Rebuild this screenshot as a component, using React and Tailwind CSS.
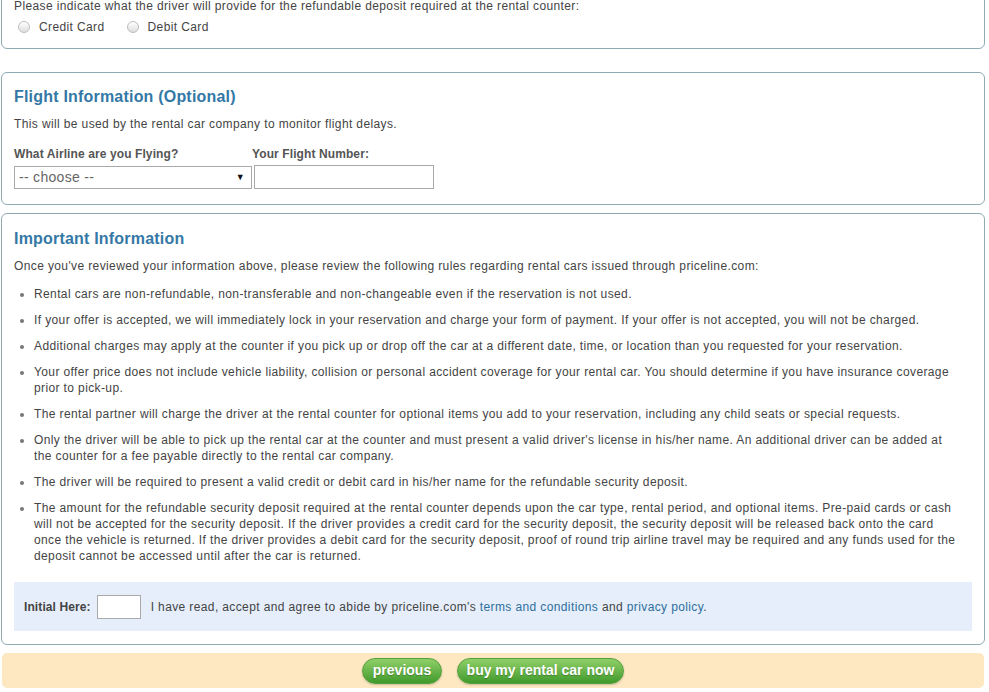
import React, { useState } from 'react';

const rules = [
    'Rental cars are non-refundable, non-transferable and non-changeable even if the reservation is not used.',
    'If your offer is accepted, we will immediately lock in your reservation and charge your form of payment. If your offer is not accepted, you will not be charged.',
    'Additional charges may apply at the counter if you pick up or drop off the car at a different date, time, or location than you requested for your reservation.',
    'Your offer price does not include vehicle liability, collision or personal accident coverage for your rental car. You should determine if you have insurance coverage prior to pick-up.',
    'The rental partner will charge the driver at the rental counter for optional items you add to your reservation, including any child seats or special requests.',
    "Only the driver will be able to pick up the rental car at the counter and must present a valid driver's license in his/her name. An additional driver can be added at the counter for a fee payable directly to the rental car company.",
    'The driver will be required to present a valid credit or debit card in his/her name for the refundable security deposit.',
    'The amount for the refundable security deposit required at the rental counter depends upon the car type, rental period, and optional items. Pre-paid cards or cash will not be accepted for the security deposit. If the driver provides a credit card for the security deposit, the security deposit will be released back onto the card once the vehicle is returned. If the driver provides a debit card for the security deposit, proof of round trip airline travel may be required and any funds used for the deposit cannot be accessed until after the car is returned.',
];

const Radio = ({ label, checked, onClick }) => (
    <label onClick={onClick} className="flex items-center gap-[9px] cursor-pointer">
        <span className="w-[12px] h-[12px] rounded-full border border-[#bdbdbd] bg-gradient-to-b from-white to-[#dedede] flex items-center justify-center">
            {checked && <span className="w-[5px] h-[5px] rounded-full bg-[#333]" />}
        </span>
        <span>{label}</span>
    </label>
);

const App = () => {
    const [deposit, setDeposit] = useState('');
    const [flight, setFlight] = useState('');
    const [initials, setInitials] = useState('');

    return (
        <div className="w-[989px] h-[692px] overflow-hidden bg-white font-['Liberation_Sans',Arial,sans-serif] text-[12px] tracking-[0.38px] text-[#444]">
            <div className="w-[985px] pl-px">
                {/* Deposit card (top cut off) */}
                <div className="-mt-[16px] border border-[#8eaab3] rounded-[6px] bg-white px-[12px] pt-[14px] pb-[13px]">
                    <p className="leading-[14px]">Please indicate what the driver will provide for the refundable deposit required at the rental counter:</p>
                    <div className="flex items-center gap-[22px] mt-[6px] pl-[4px] h-[16px]">
                        <Radio label="Credit Card" checked={deposit === 'credit'} onClick={() => setDeposit('credit')} />
                        <Radio label="Debit Card" checked={deposit === 'debit'} onClick={() => setDeposit('debit')} />
                    </div>
                </div>

                {/* Flight Information */}
                <div className="mt-[23px] border border-[#8eaab3] rounded-[6px] bg-white px-[12px] pt-[15px] pb-[15px]">
                    <h2 className="text-[16px] leading-[18px] font-bold tracking-[0.2px] text-[#3478a6]">Flight Information (Optional)</h2>
                    <p className="mt-[11px] leading-[14px]">This will be used by the rental car company to monitor flight delays.</p>
                    <div className="flex mt-[16px]">
                        <div className="w-[238px]">
                            <div className="font-bold leading-[14px] tracking-[0.1px] text-[#555]">What Airline are you Flying?</div>
                            <div className="mt-[5px] w-[238px] h-[23px] border border-[#a9a9a9] bg-white flex items-center justify-between pl-[4px] pr-[6px]">
                                <span className="text-[14px] tracking-[0.3px] text-[#666]">-- choose --</span>
                                <span className="text-[9px] text-[#111]">▼</span>
                            </div>
                        </div>
                        <div>
                            <div className="font-bold leading-[14px] tracking-[0.1px] text-[#555]">Your Flight Number:</div>
                            <input
                                value={flight}
                                onChange={(e) => setFlight(e.target.value)}
                                className="mt-[4px] ml-[2px] w-[180px] h-[24px] border border-[#a9a9a9] bg-white outline-none px-1 text-[13px]"
                            />
                        </div>
                    </div>
                </div>

                {/* Important Information */}
                <div className="mt-[8px] border border-[#8eaab3] rounded-[6px] bg-white px-[12px] pt-[16px] pb-[13px]">
                    <h2 className="text-[16px] leading-[18px] font-bold tracking-[0.2px] text-[#3478a6]">Important Information</h2>
                    <p className="mt-[11px] leading-[14px]">Once you've reviewed your information above, please review the following rules regarding rental cars issued through priceline.com:</p>
                    <ul className="mt-[13px] pl-[20px] pr-[10px] list-disc marker:text-[#777]">
                        {rules.map((r, i) => (
                            <li key={i} className={`leading-[16px] ${i > 0 ? 'mt-[10px]' : ''}`}>{r}</li>
                        ))}
                    </ul>
                    <div className="mt-[18px] h-[49px] bg-[#e5eefa] flex items-center pl-[10px]">
                        <span className="font-bold tracking-[0.1px] text-[#444]">Initial Here:</span>
                        <input
                            value={initials}
                            onChange={(e) => setInitials(e.target.value)}
                            className="ml-[6px] w-[44px] h-[24px] border border-[#aaa] bg-white outline-none px-1 text-[13px]"
                        />
                        <span className="ml-[10px]">
                            I have read, accept and agree to abide by priceline.com's{' '}
                            <a href="#" className="text-[#2d6f9e]">terms and conditions</a> and{' '}
                            <a href="#" className="text-[#2d6f9e]">privacy policy</a>.
                        </span>
                    </div>
                </div>

                {/* Action bar */}
                <div className="mt-[8px] mx-px h-[35px] rounded-[5px] bg-[#fde8c2] flex items-center justify-center gap-[15px]">
                    <button className="h-[26px] w-[80px] rounded-full border border-[#55a03c] bg-gradient-to-b from-[#8fd068] to-[#3f9a2b] text-white text-[14px] font-bold tracking-normal [text-shadow:0_1px_1px_rgba(0,0,0,0.25)] shadow-[0_1px_2px_rgba(0,0,0,0.2)]">
                        previous
                    </button>
                    <button className="h-[26px] w-[167px] rounded-full border border-[#55a03c] bg-gradient-to-b from-[#8fd068] to-[#3f9a2b] text-white text-[14px] font-bold tracking-normal [text-shadow:0_1px_1px_rgba(0,0,0,0.25)] shadow-[0_1px_2px_rgba(0,0,0,0.2)]">
                        buy my rental car now
                    </button>
                </div>
            </div>
        </div>
    );
};

export default App;
